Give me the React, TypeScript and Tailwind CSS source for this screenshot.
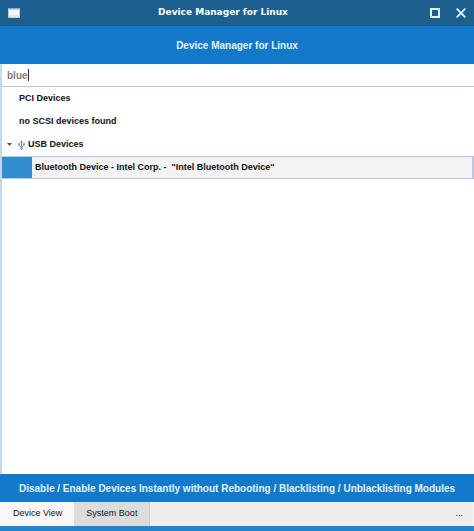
import React, { useState } from 'react';

const TABS = ['Device View', 'System Boot'];

const UsbIcon: React.FC = () => (
  <svg width="7" height="10" viewBox="0 0 7 10" fill="none" stroke="#4f94cf" aria-hidden="true">
    <path d="M3.5 1.5V9M1 4v1.5l2.5 2M6 4v1.5l-2.5 2" strokeWidth="1" />
    <path d="M3.5 0 5 2.5H2Z" fill="#4f94cf" stroke="none" />
    <circle cx="3.5" cy="8.8" r="1.1" fill="#4f94cf" stroke="none" />
    <rect x="0" y="3.2" width="2" height="2" fill="#6fa8dc" stroke="none" />
    <rect x="5" y="3.2" width="2" height="2" fill="#6fa8dc" stroke="none" />
  </svg>
);

const WindowIcon: React.FC = () => (
  <svg width="12" height="10" viewBox="0 0 12 10" aria-hidden="true">
    <rect width="12" height="10" fill="#b9d5ea" />
    <rect x="1" y="2" width="10" height="7" fill="#f8f5f2" />
    <rect x="1" y="7" width="10" height="2" fill="#ebe3dd" />
    <rect width="12" height="1" fill="#7fb0d6" />
  </svg>
);

const App: React.FC = () => {
  const [query, setQuery] = useState('blue');
  const [activeTab, setActiveTab] = useState('Device View');

  return (
    <div className="flex min-h-screen flex-col bg-white font-['Liberation_Sans',Arial,sans-serif] text-[9px] text-[#111111]">

      {/* Title bar */}
      <div className="grid h-[26px] grid-cols-[1fr_auto_1fr] items-center bg-[#1d608f] px-2 text-white">
        <WindowIcon />
        <span className="pr-7 font-['DejaVu_Sans',sans-serif] text-[9px] font-bold">Device Manager for Linux</span>
        <div className="flex items-center justify-end gap-4">
          <button type="button" aria-label="Maximize">
            <svg width="10" height="10" viewBox="0 0 10 10" className="block" fill="none" stroke="#e4f5ff" strokeWidth="2">
              <rect x="1" y="1" width="8" height="8" />
            </svg>
          </button>
          <button type="button" aria-label="Close">
            <svg width="10" height="10" viewBox="0 0 10 10" className="block" fill="none" stroke="#e4f5ff" strokeWidth="1.7">
              <path d="m.7.7 8.6 8.6M9.3.7.7 9.3" />
            </svg>
          </button>
        </div>
      </div>

      <h1 className="flex h-[38px] items-center justify-center bg-[#137acb] text-[10px] font-bold text-[#e3f4ff]">
        Device Manager for Linux
      </h1>

      <div className="flex flex-1 flex-col border-l-2 border-[#c5d8f3]">
        {/* Search */}
        <div className="relative flex h-[23px] items-center border-b border-[#b3c6e6] pl-[5px]">
          <input
            type="text"
            aria-label="Search devices"
            value={query}
            onChange={(e) => setQuery(e.target.value)}
            className="w-full bg-transparent text-[10px] font-bold text-[#808080] caret-[#333333] outline-none"
          />
          {/* Text cursor */}
          <span className="absolute left-[26px] h-3 w-px bg-[#333333]" />
        </div>

        {/* Device tree */}
        <ul className="font-bold">
          <li className="flex h-[23px] items-center pl-[17px]">PCI Devices</li>
          <li className="flex h-[23px] items-center pl-[17px]">no SCSI devices found</li>
          <li>
            <div className="flex h-[23px] items-center pl-[5px]">
              <svg width="5" height="3" viewBox="0 0 5 3" fill="#555555" aria-hidden="true">
                <path d="M0 0h5L2.5 3Z" />
              </svg>
              <span className="ml-1.5 mr-[3px]"><UsbIcon /></span>
              USB Devices
            </div>
            <ul>
              <li className="flex h-[23px] border-y border-r-2 border-[#b8cae8] bg-[#f3f3f3]">
                <span className="mr-[3px] w-[30px] bg-[#318dcb]" />
                <span className="self-center whitespace-pre">Bluetooth Device - Intel Corp. -  "Intel Bluetooth Device"</span>
              </li>
            </ul>
          </li>
        </ul>
      </div>

      <p className="flex min-h-7 items-center justify-center bg-[#137acb] text-center text-[10px] font-bold text-[#e3f4ff]">
        Disable / Enable Devices Instantly without Rebooting / Blacklisting / Unblacklisting Modules
      </p>

      {/* Tabs */}
      <div className="flex h-6 border-x border-[#f8f8f8] bg-[#ededed]">
        {TABS.map((tab) => (
          <button
            key={tab}
            type="button"
            onClick={() => setActiveTab(tab)}
            className={`px-3 ${activeTab === tab ? 'bg-[#f8f8f8]' : 'border-r border-[#cccccc] bg-[#dcdcdc]'}`}
          >
            {tab}
          </button>
        ))}
        <button type="button" aria-label="More" className="ml-auto px-[10px]">...</button>
      </div>
      <div className="h-[5px] bg-[#2485cf]" />
    </div>
  );
};

export default App;
